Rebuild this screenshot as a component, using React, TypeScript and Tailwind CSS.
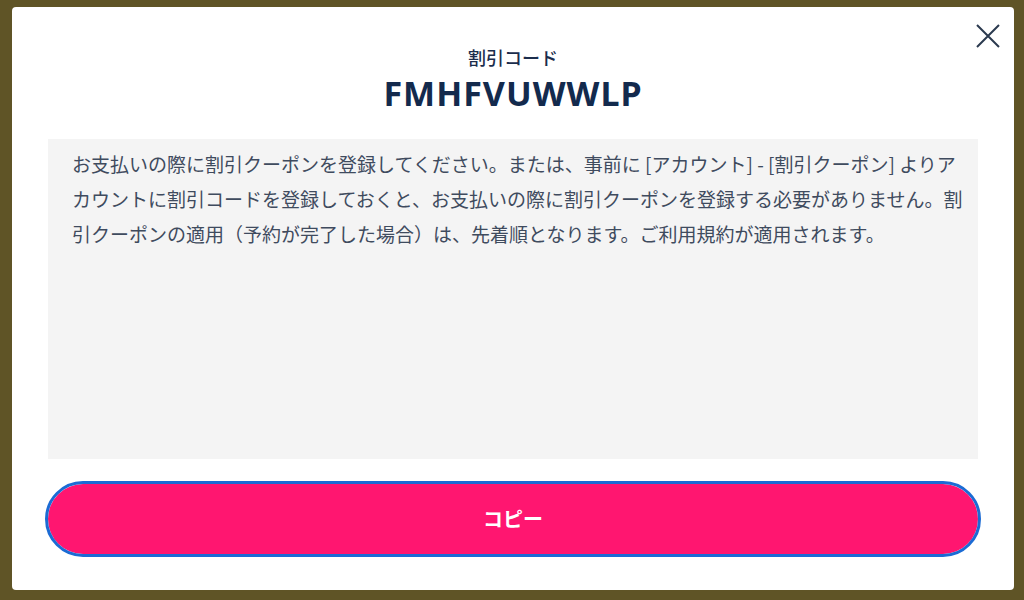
import React from "react"

export default function App() {
  return (
    <div className="h-[600px] w-[1024px] bg-[#5f5426] pt-[7px] pl-[12px]" style={{ fontFamily: '"Noto Sans CJK JP", "Noto Sans", sans-serif' }}>
      <div className="relative flex h-[583px] w-[1002px] flex-col rounded-[4px] bg-white px-[36px] pt-[38px]">
        <button className="absolute right-[14px] top-[17px] h-[24px] w-[24px] text-[#2b3a4f]" aria-label="閉じる">
          <svg viewBox="0 0 24 24" className="h-[24px] w-[24px]" fill="none" stroke="currentColor" strokeWidth="2">
            <path d="M1 1L23 23M23 1L1 23" />
          </svg>
        </button>

        <div className="text-center text-[18px] leading-[24px] font-medium text-[#1b2d4c]">割引コード</div>
        <div
          className="mt-[7px] text-center text-[34px] leading-[34px] font-bold tracking-[1px] text-[#132a4d]"
          style={{ fontFamily: '"Noto Sans", sans-serif' }}
        >
          FMHFVUWWLP
        </div>

        <div className="mt-[29px] h-[320px] bg-[#f4f4f4] pl-[24px] pr-[9px] pt-[7px]">
          <p className="text-[19px] leading-[35px] text-[#3f4b5e]">
            お支払いの際に割引クーポンを登録してください。または、事前に [アカウント] - [割引クーポン] よりアカウントに割引コードを登録しておくと、お支払いの際に割引クーポンを登録する必要がありません。割引クーポンの適用（予約が完了した場合）は、先着順となります。ご利用規約が適用されます。
          </p>
        </div>

        <button className="mt-[25px] h-[70px] w-full rounded-full bg-[#ff1670] text-[20px] font-bold text-white outline-[3px] outline-[#1b6bd4]">
          コピー
        </button>
      </div>
    </div>
  )
}
